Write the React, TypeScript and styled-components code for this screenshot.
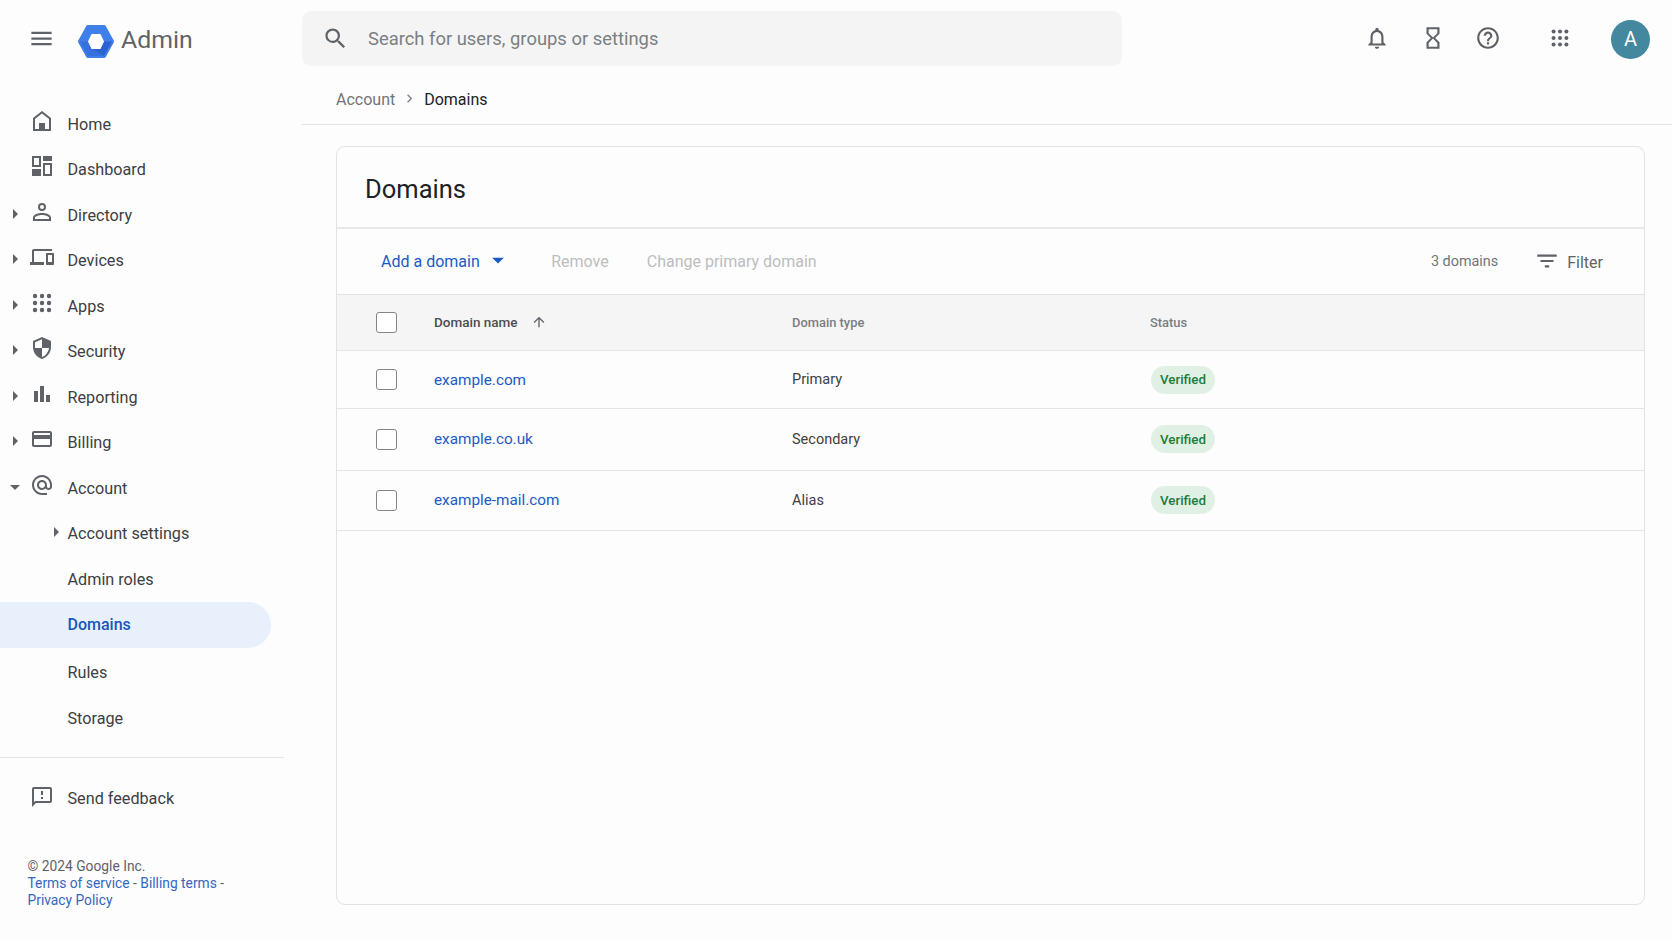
import React from 'react';
import styled, { createGlobalStyle } from 'styled-components';
import {
    MdAlternateEmail,
    MdArrowDropDown,
    MdArrowRight,
    MdArrowUpward,
    MdBarChart,
    MdChevronRight,
    MdFilterList,
    MdHelpOutline,
    MdMenu,
    MdOutlineCreditCard,
    MdOutlineDevices,
    MdOutlineFeedback,
    MdOutlineHourglassEmpty,
    MdOutlineNotifications,
    MdSearch,
    MdSecurity,
} from 'react-icons/md';

const GlobalStyle = createGlobalStyle`
    html, body {
        margin: 0;
        padding: 0;
        height: 100%;
        background: #fdfdfd;
        font-family: Roboto, "Liberation Sans", sans-serif;
        color: #3c4043;
    }
    * {
        box-sizing: border-box;
    }
`;

const Page = styled.div`
    display: flex;
    width: 1672px;
    height: 941px;
    overflow: hidden;
    background: #fdfdfd;
`;

const Sidebar = styled.aside`
    width: 302px;
    flex: none;
    display: flex;
    flex-direction: column;
`;

const Brand = styled.div`
    height: 101.5px;
    flex: none;
    display: flex;
    align-items: flex-start;
    padding: 24px 0 0 28px;
`;

const MenuButton = styled.div`
    width: 27px;
    height: 27px;
    margin-top: 1px;
    margin-right: 22px;
    color: #5f6368;
    font-size: 27px;
    line-height: 0;
`;

const BrandName = styled.span`
    margin-left: 6px;
    font-size: 24.8px;
    line-height: 32px;
    color: #5f6368;
`;

const Nav = styled.nav`
    display: flex;
    flex-direction: column;
    width: 271px;
`;

const NavRow = styled.div<{ $active?: boolean; $gap?: number }>`
    height: 45.5px;
    flex: none;
    display: flex;
    align-items: center;
    margin-top: ${({ $gap }) => $gap ?? 0}px;
    border-radius: 0 23px 23px 0;
    background: ${({ $active }) => ($active ? '#e8f0fc' : 'transparent')};
    color: ${({ $active }) => ($active ? '#1a56b8' : '#3c4043')};
    font-size: ${({ $active }) => ($active ? 16 : 16.2)}px;
    font-weight: ${({ $active }) => ($active ? 500 : 400)};
`;

const CaretSlot = styled.span<{ $width: number; $inset?: number }>`
    width: ${({ $width }) => $width}px;
    flex: none;
    display: flex;
    justify-content: flex-end;
    align-items: center;
    height: 20px;
    margin-top: -3px;
    padding-right: ${({ $inset }) => $inset ?? 0}px;
    color: #5f6368;
    font-size: 24px;
`;

const IconSlot = styled.span`
    width: 24px;
    height: 24px;
    flex: none;
    margin-right: 13.5px;
    margin-top: -7px;
    color: #5f6368;
    font-size: 24px;
    line-height: 0;
`;

const Rule = styled.hr`
    width: 284px;
    height: 1px;
    margin: 15.500px 0 0;
    border: 0;
    background: #e4e4e4;
`;

const FeedbackRow = styled(NavRow)`
    margin-top: 18px;
    padding-left: 30px;
`;

const FeedbackIcon = styled(IconSlot)`
    margin-top: -3px;
`;

const Legal = styled.div`
    margin: 37px 0 0 27.500px;
    width: 220px;
    font-size: 13.8px;
    line-height: 17px;
    color: #5f6368;
`;

const LegalLink = styled.a`
    color: #3367c0;
    text-decoration: none;
`;

const Main = styled.main`
    flex: 1;
    min-width: 0;
    display: flex;
    flex-direction: column;
`;

const TopBar = styled.header`
    height: 66px;
    flex: none;
    margin-top: 11px;
    display: flex;
    align-items: flex-start;
`;

const SearchBox = styled.div`
    width: 820px;
    height: 55px;
    flex: none;
    display: flex;
    align-items: center;
    padding-left: 20px;
    border-radius: 9px;
    background: #f4f4f5;
    color: #5f6368;
    font-size: 18.4px;
`;

const SearchIcon = styled.span`
    font-size: 27px;
    line-height: 0;
    margin-right: 19px;
    margin-top: -1px;
`;

const SearchText = styled.span`
    color: #7b7f83;
`;

const TopActions = styled.div`
    flex: 1;
    display: flex;
    align-items: center;
    height: 55px;
    color: #5f6368;
    font-size: 26px;
    padding-left: 242px;
`;

const ActionIcon = styled.span<{ $width: number }>`
    width: ${({ $width }) => $width}px;
    flex: none;
    line-height: 0;
    margin-top: -1px;
`;

const Avatar = styled.div`
    width: 39px;
    height: 39px;
    flex: none;
    border-radius: 50%;
    background: #44889f;
    color: #fff;
    display: flex;
    align-items: center;
    justify-content: center;
    font-size: 20px;
    margin-top: 1px;
`;

const Breadcrumb = styled.div`
    height: 48px;
    flex: none;
    display: flex;
    align-items: center;
    padding-left: 34px;
    padding-bottom: 3px;
    border-bottom: 1px solid #e4e4e4;
    font-size: 16px;
`;

const CrumbParent = styled.span`
    color: #70757a;
`;

const CrumbArrow = styled.span`
    display: inline-flex;
    width: 29px;
    justify-content: center;
    margin-top: -2px;
    color: #80868b;
    font-size: 17px;
`;

const CrumbCurrent = styled.span`
    color: #202124;
`;

const Card = styled.section`
    margin: 21px 27px 0 34px;
    height: 759px;
    flex: none;
    border: 1px solid #e2e2e2;
    border-radius: 9px;
    display: flex;
    flex-direction: column;
    overflow: hidden;
`;

const CardTitle = styled.h1`
    height: 82px;
    flex: none;
    margin: 0;
    padding: 4px 0 0 28px;
    display: flex;
    align-items: center;
    border-bottom: 2px solid #e8e8e8;
    font-size: 25.5px;
    font-weight: 400;
    color: #202124;
`;

const Toolbar = styled.div`
    height: 66px;
    flex: none;
    display: flex;
    align-items: center;
    padding-left: 44px;
    border-bottom: 1px solid #e2e2e2;
    font-size: 16px;
`;

const AddButton = styled.span`
    display: inline-flex;
    align-items: center;
    color: #1a5ac4;
    margin-top: -1px;
    margin-right: 39.500px;
`;

const AddCaret = styled.span`
    font-size: 28px;
    line-height: 0;
    margin-left: 4px;
    margin-top: -2px;
`;

const DisabledAction = styled.span`
    color: #bcbec0;
    margin-right: 38px;
    margin-top: -1px;
`;

const ToolbarRight = styled.div`
    margin-left: auto;
    display: flex;
    align-items: center;
    padding-right: 41px;
`;

const Count = styled.span`
    color: #70757a;
    font-size: 14.4px;
    margin-right: 36px;
`;

const FilterButton = styled.span`
    display: inline-flex;
    align-items: center;
    color: #5f6368;
    padding-top: 2px;
`;

const FilterIcon = styled.span`
    font-size: 26px;
    line-height: 0;
    margin-right: 7px;
    margin-top: -3px;
`;

const TableRow = styled.div<{ $head?: boolean; $height: number }>`
    height: ${({ $height }) => $height}px;
    flex: none;
    display: grid;
    grid-template-columns: 97px 358px 358px 1fr;
    align-items: center;
    background: ${({ $head }) => ($head ? '#f5f5f5' : 'transparent')};
    border-bottom: 1.5px solid #e4e4e4;
`;

const CheckCell = styled.div`
    padding-left: 39px;
    display: flex;
    align-items: center;
`;

const Check = styled.input`
    appearance: none;
    width: 21px;
    height: 21px;
    margin: 0;
    border: 1.5px solid #80868b;
    border-radius: 3px;
    background: #fff;
`;

const HeadCell = styled.div<{ $dark?: boolean }>`
    display: flex;
    align-items: center;
    margin-top: ${({ $dark }) => ($dark ? -1 : 0)}px;
    font-size: ${({ $dark }) => ($dark ? 13.5 : 12.9)}px;
    font-weight: 500;
    color: ${({ $dark }) => ($dark ? '#4a4e52' : '#7a7e83')};
`;

const SortIcon = styled.span`
    font-size: 16px;
    line-height: 0;
    margin-left: 13px;
    color: #5f6368;
`;

const DomainLink = styled.a`
    color: #1a5ac4;
    font-size: 15.300px;
    text-decoration: none;
`;

const TypeCell = styled.div`
    color: #3c4043;
    font-size: 14.5px;
`;

const StatusPill = styled.span`
    display: inline-flex;
    align-items: center;
    justify-content: center;
    width: 64px;
    height: 28px;
    margin-left: 1px;
    border-radius: 14px;
    background: #e1f0e5;
    color: #1b7d3a;
    font-size: 13.3px;
    font-weight: 500;
`;

const HomeGlyph = () => (
    <svg width="24" height="24" viewBox="0 0 24 24" fill="currentColor" fillRule="evenodd">
        <path d="M12 2 3 9v13h18V9L12 2zm0 2.600 7 5.400v10H5V10l7-5.400zM9 14h6v6H9z" />
    </svg>
);

const DashboardGlyph = () => (
    <svg width="24" height="24" viewBox="0 0 24 24" fill="currentColor">
        <path d="M2 2h9v11H2V2zm2 2v7h5V4H4zM13 2h9v5h-9V2zM2 15h9v7H2v-7zM13 9h9v13h-9V9zm2 2v9h5v-9h-5z" />
    </svg>
);

const PersonGlyph = () => (
    <svg width="24" height="24" viewBox="0 0 24 24" fill="currentColor">
        <path d="M12 3a4 4 0 1 0 0 8 4 4 0 0 0 0-8zm0 2a2 2 0 1 1 0 4 2 2 0 0 1 0-4zM12 13c-3.300 0-9 1.400-9 4.600V21h18v-3.400C21 14.400 15.300 13 12 13zm-7 6v-1.400C5 16.300 9.200 15 12 15s7 1.300 7 2.600V19H5z" />
    </svg>
);

const DotsGlyph = ({ size = 24 }: { size?: number }) => (
    <svg width={size} height={size} viewBox="0 0 24 24" fill="currentColor">
        {[5, 12, 19].flatMap(y =>
            [5, 12, 19].map(x => (
                <circle key={`${x}-${y}`} cx={x} cy={y} r="2.200" />
            )),
        )}
    </svg>
);

const AdminLogo = () => (
    <svg width="38" height="35" viewBox="0 0 38 35">
        <polygon
            points="3,17.500 11,3 27,3 35,17.500 27,32 11,32"
            fill="#3f7fea"
            stroke="#3f7fea"
            strokeWidth="4"
            strokeLinejoin="round"
        />
        <polygon points="3,17.500 11,17.500 14.500,24.500 27,32 11,32" fill="#3570dc" />
        <polygon points="35,17.500 27,17.500 23.500,24.500 14.500,24.500 27,32" fill="#2b62cf" />
        <polygon points="11,17.500 14.500,10 23.500,10 27,17.500 23.500,25 14.500,25" fill="#fff" />
    </svg>
);

const TOP_ITEMS: { label: string; icon: React.ReactNode; caret?: 'right' | 'down' }[] = [
    { label: 'Home', icon: <HomeGlyph /> },
    { label: 'Dashboard', icon: <DashboardGlyph /> },
    { label: 'Directory', icon: <PersonGlyph />, caret: 'right' },
    { label: 'Devices', icon: <MdOutlineDevices />, caret: 'right' },
    { label: 'Apps', icon: <DotsGlyph />, caret: 'right' },
    { label: 'Security', icon: <MdSecurity />, caret: 'right' },
    { label: 'Reporting', icon: <MdBarChart />, caret: 'right' },
    { label: 'Billing', icon: <MdOutlineCreditCard />, caret: 'right' },
    { label: 'Account', icon: <MdAlternateEmail />, caret: 'down' },
];

const DOMAINS = [
    { name: 'example.com', type: 'Primary', height: 58 },
    { name: 'example.co.uk', type: 'Secondary', height: 61.5 },
    { name: 'example-mail.com', type: 'Alias', height: 60 },
];

export default function App() {
    return (
        <Page>
            <GlobalStyle />
            <Sidebar>
                <Brand>
                    <MenuButton>
                        <MdMenu />
                    </MenuButton>
                    <AdminLogo />
                    <BrandName>Admin</BrandName>
                </Brand>
                <Nav>
                    {TOP_ITEMS.map(item => (
                        <NavRow key={item.label}>
                            <CaretSlot $width={30} $inset={3}>
                                {item.caret === 'right' && <MdArrowRight />}
                                {item.caret === 'down' && <MdArrowDropDown />}
                            </CaretSlot>
                            <IconSlot>{item.icon}</IconSlot>
                            {item.label}
                        </NavRow>
                    ))}
                    <NavRow>
                        <CaretSlot $width={67.5}>
                            <MdArrowRight />
                        </CaretSlot>
                        Account settings
                    </NavRow>
                    <NavRow>
                        <CaretSlot $width={67.5} />
                        Admin roles
                    </NavRow>
                    <NavRow $active>
                        <CaretSlot $width={67.5} />
                        Domains
                    </NavRow>
                    <NavRow $gap={2.5}>
                        <CaretSlot $width={67.5} />
                        Rules
                    </NavRow>
                    <NavRow>
                        <CaretSlot $width={67.5} />
                        Storage
                    </NavRow>
                </Nav>
                <Rule />
                <FeedbackRow>
                    <FeedbackIcon>
                        <MdOutlineFeedback />
                    </FeedbackIcon>
                    Send feedback
                </FeedbackRow>
                <Legal>
                    © 2024 Google Inc.
                    <br />
                    <LegalLink>Terms of service</LegalLink> -{' '}
                    <LegalLink>Billing terms</LegalLink> -
                    <br />
                    <LegalLink>Privacy Policy</LegalLink>
                </Legal>
            </Sidebar>
            <Main>
                <TopBar>
                    <SearchBox>
                        <SearchIcon>
                            <MdSearch />
                        </SearchIcon>
                        <SearchText>Search for users, groups or settings</SearchText>
                    </SearchBox>
                    <TopActions>
                        <ActionIcon $width={56}>
                            <MdOutlineNotifications />
                        </ActionIcon>
                        <ActionIcon $width={55}>
                            <MdOutlineHourglassEmpty />
                        </ActionIcon>
                        <ActionIcon $width={74}>
                            <MdHelpOutline />
                        </ActionIcon>
                        <ActionIcon $width={62}>
                            <DotsGlyph size={22} />
                        </ActionIcon>
                        <Avatar>A</Avatar>
                    </TopActions>
                </TopBar>
                <Breadcrumb>
                    <CrumbParent>Account</CrumbParent>
                    <CrumbArrow>
                        <MdChevronRight />
                    </CrumbArrow>
                    <CrumbCurrent>Domains</CrumbCurrent>
                </Breadcrumb>
                <Card>
                    <CardTitle>Domains</CardTitle>
                    <Toolbar>
                        <AddButton>
                            Add a domain
                            <AddCaret>
                                <MdArrowDropDown />
                            </AddCaret>
                        </AddButton>
                        <DisabledAction>Remove</DisabledAction>
                        <DisabledAction>Change primary domain</DisabledAction>
                        <ToolbarRight>
                            <Count>3 domains</Count>
                            <FilterButton>
                                <FilterIcon>
                                    <MdFilterList />
                                </FilterIcon>
                                Filter
                            </FilterButton>
                        </ToolbarRight>
                    </Toolbar>
                    <TableRow $head $height={56}>
                        <CheckCell>
                            <Check type="checkbox" />
                        </CheckCell>
                        <HeadCell $dark>
                            Domain name
                            <SortIcon>
                                <MdArrowUpward />
                            </SortIcon>
                        </HeadCell>
                        <HeadCell>Domain type</HeadCell>
                        <HeadCell>Status</HeadCell>
                    </TableRow>
                    {DOMAINS.map(domain => (
                        <TableRow key={domain.name} $height={domain.height}>
                            <CheckCell>
                                <Check type="checkbox" />
                            </CheckCell>
                            <DomainLink>{domain.name}</DomainLink>
                            <TypeCell>{domain.type}</TypeCell>
                            <div>
                                <StatusPill>Verified</StatusPill>
                            </div>
                        </TableRow>
                    ))}
                </Card>
            </Main>
        </Page>
    );
}
